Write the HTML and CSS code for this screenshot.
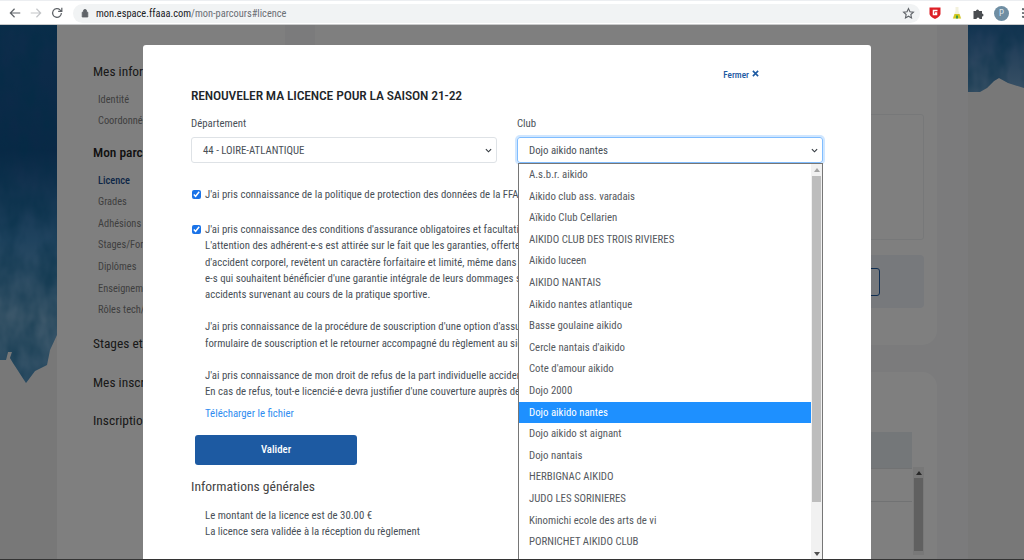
FILE: index.html
```html
<!DOCTYPE html>
<html lang="fr">
<head>
<meta charset="utf-8">
<title>Mon parcours</title>
<link rel="stylesheet" href="styles.css">
</head>
<body>
<div class="window">
  <header class="toolbar">
    <div class="nav-icons">
      <svg class="tb-icon" viewBox="0 0 16 16"><path d="M14 8H3M7.500 3.200 2.700 8l4.800 4.800" class="st dark"/></svg>
      <svg class="tb-icon" viewBox="0 0 16 16"><path d="M2 8h11M8.500 3.200 13.300 8l-4.800 4.800" class="st faint"/></svg>
      <svg class="tb-icon" viewBox="0 0 16 16"><path d="M13 8a5 5 0 1 1-1.500-3.600L13.500 6.200M13.500 2v4.200H9.300" class="st dark"/></svg>
    </div>
    <div class="omnibox">
      <svg class="lock" viewBox="0 0 10 12"><path d="M1.500 5h7v6h-7zM3 5V3.500a2 2 0 0 1 4 0V5" class="lock-path"/></svg>
      <span class="url"><span class="host">mon.espace.ffaaa.com</span>/mon-parcours#licence</span>
      <svg class="star" viewBox="0 0 16 16"><path d="M8 2l1.800 3.900 4.200.5-3.100 2.900.8 4.200L8 11.400l-3.700 2.100.8-4.200L2 6.400l4.200-.5z" class="st dark"/></svg>
    </div>
    <div class="ext-icons">
      <svg class="ext" viewBox="0 0 14 14"><path d="M1.500 1.500h11v6c0 2.500-3 4.500-5.500 5.500C4.500 12 1.500 10 1.500 7.500z" fill="#dd1f26"/><path d="M9.500 4.500h-4v4h3V7H7" fill="none" stroke="#fff" stroke-width="1.500"/></svg>
      <svg class="ext" viewBox="0 0 14 14"><path d="M5.500 1h3v4l3 7.500h-9l3-7.500z" fill="#f3f1dd"/><path d="M4.500 8h5l1.500 4.500H3z" fill="#d4c81e"/><path d="M6 9.500h2v3H6z" fill="#3f9b45"/></svg>
      <svg class="ext" viewBox="0 0 14 14"><path d="M1.500 5H4a1.500 1.500 0 1 1 3 0h3v2.500a1.500 1.500 0 1 1 0 3V13H7.500a1.500 1.500 0 1 0-3 0H1.500z" fill="#4a4d51"/></svg>
      <span class="avatar">P</span>
      <svg class="dots" viewBox="0 0 4 14"><circle cx="2" cy="2.500" r="1.300"/><circle cx="2" cy="7" r="1.300"/><circle cx="2" cy="11.500" r="1.300"/></svg>
    </div>
  </header>

  <main class="stage">
    <div class="page">
      <svg class="paint" viewBox="0 0 57 534" preserveAspectRatio="none">
        <defs>
          <linearGradient id="blueL" x1="0" y1="0" x2="0" y2="1">
            <stop offset="0" stop-color="#1a5a96"/><stop offset=".35" stop-color="#15508c"/>
            <stop offset=".6" stop-color="#3f86bd"/><stop offset=".82" stop-color="#80b4d9"/><stop offset="1" stop-color="#5f9ecb"/>
          </linearGradient>
          <filter id="grain"><feTurbulence type="fractalNoise" baseFrequency=".05 .03" numOctaves="3"/><feColorMatrix values="0 0 0 0 0 0 0 0 0 .1 0 0 0 0 .25 0 0 0 .9 -.25"/><feComposite in2="SourceGraphic" operator="in"/></filter>
        </defs>
        <rect width="57" height="534" fill="#f1f1f1"/>
        <path d="M0 0H57V310L50 325 47 340 35 346 26 358 13 338 10 333 12 327 8 327 6 335H0z" fill="url(#blueL)"/>
        <path d="M0 0H57V310L50 325 47 340 35 346 26 358 13 338 10 333 12 327 8 327 6 335H0z" filter="url(#grain)"/>
      </svg>

      <div class="content">
        <nav class="sidebar">
          <h2 class="side-head">Mes informations</h2>
          <ul class="side-list">
            <li>Identité</li>
            <li>Coordonnées</li>
          </ul>
          <h2 class="side-head strong">Mon parcours</h2>
          <ul class="side-list second-list">
            <li class="current">Licence</li>
            <li>Grades</li>
            <li>Adhésions</li>
            <li>Stages/Formations</li>
            <li>Diplômes</li>
            <li>Enseignement</li>
            <li>Rôles tech/admin</li>
          </ul>
          <h2 class="side-head lone l1">Stages et formations</h2>
          <h2 class="side-head lone l2">Mes inscriptions</h2>
          <h2 class="side-head lone l3">Inscription</h2>
        </nav>
        <section class="main-col">
          <div class="card card-top">
            <div class="spacer-a"></div>
            <div class="outline-box"></div>
            <div class="tint-box"><span class="tint-btn"></span></div>
          </div>
          <div class="card card-bottom">
            <div class="table-wrap">
              <div class="table">
                <div class="thead"></div>
                <div class="trow"></div>
                <div class="trow"></div>
              </div>
              <div class="tscroll"><span class="tup"></span><span class="tthumb"></span></div>
            </div>
          </div>
        </section>
      </div>

      <svg class="paint" viewBox="0 0 56 534" preserveAspectRatio="none">
        <defs>
          <linearGradient id="blueR" x1="0" y1="0" x2="0" y2="1">
            <stop offset="0" stop-color="#2f6ca8"/><stop offset="1" stop-color="#72a2cb"/>
          </linearGradient>
        </defs>
        <rect width="56" height="534" fill="#f1f1f1"/>
        <path d="M0 0H56V63L40 58 31 53 26 56 19 63 12 67H0z" fill="url(#blueR)"/>
        <path d="M0 0H56V63L40 58 31 53 26 56 19 63 12 67H0z" filter="url(#grain)"/>
      </svg>
    </div>

    <div class="backdrop"></div>

    <div class="modal">
      <a class="close">Fermer <svg class="close-x" viewBox="0 0 8 8"><path d="M1 1l6 6M7 1L1 7"/></svg></a>
      <h1 class="title">RENOUVELER MA LICENCE POUR LA SAISON 21-22</h1>
      <div class="fields">
        <div class="field">
          <label class="lbl">Département</label>
          <div class="select">44 - LOIRE-ATLANTIQUE<svg class="chev" viewBox="0 0 8 5"><path d="M1 1l3 3 3-3"/></svg></div>
        </div>
        <div class="field">
          <label class="lbl">Club</label>
          <div class="select focus">Dojo aikido nantes<svg class="chev" viewBox="0 0 8 5"><path d="M1 1l3 3 3-3"/></svg></div>
        </div>
      </div>

      <div class="check-row first">
        <input class="cb" type="checkbox" checked>
        <p class="para">J'ai pris connaissance de la politique de protection des données de la FFAAA</p>
      </div>
      <div class="check-row second">
        <input class="cb" type="checkbox" checked>
        <div class="para-wrap">
          <p class="para">J'ai pris connaissance des conditions d'assurance obligatoires et facultatives<br>
          L'attention des adhérent-e-s est attirée sur le fait que les garanties, offertes par<br>
          d'accident corporel, revêtent un caractère forfaitaire et limité, même dans le cas<br>
          e-s qui souhaitent bénéficier d'une garantie intégrale de leurs dommages suite<br>
          accidents survenant au cours de la pratique sportive.</p>
          <p class="para gap">J'ai pris connaissance de la procédure de souscription d'une option d'assurance<br>
          formulaire de souscription et le retourner accompagné du règlement au siège</p>
          <p class="para gap">J'ai pris connaissance de mon droit de refus de la part individuelle accident<br>
          En cas de refus, tout-e licencié-e devra justifier d'une couverture auprès de</p>
          <a class="file-link">Télécharger le fichier</a>
        </div>
      </div>
      <button class="submit" type="button">Valider</button>
      <h3 class="info-head">Informations générales</h3>
      <p class="para info">Le montant de la licence est de 30.00 €<br>La licence sera validée à la réception du règlement</p>

      <div class="dropdown">
        <ul class="options">
          <li>A.s.b.r. aikido</li>
          <li>Aikido club ass. varadais</li>
          <li>Aïkido Club Cellarien</li>
          <li>AIKIDO CLUB DES TROIS RIVIERES</li>
          <li>Aikido luceen</li>
          <li>AIKIDO NANTAIS</li>
          <li>Aikido nantes atlantique</li>
          <li>Basse goulaine aikido</li>
          <li>Cercle nantais d'aikido</li>
          <li>Cote d'amour aikido</li>
          <li>Dojo 2000</li>
          <li class="selected">Dojo aikido nantes</li>
          <li>Dojo aikido st aignant</li>
          <li>Dojo nantais</li>
          <li>HERBIGNAC AIKIDO</li>
          <li>JUDO LES SORINIERES</li>
          <li>Kinomichi ecole des arts de vi</li>
          <li>PORNICHET AIKIDO CLUB</li>
          <li>Saint nazaire aikido</li>
        </ul>
        <div class="scrollbar"><span class="arrow up"></span><span class="thumb"></span><span class="arrow down"></span></div>
      </div>
    </div>
  </main>
  <div class="taskbar"></div>
</div>
</body>
</html>
```
FILE: styles.css
```css
* { box-sizing: border-box; }
html, body { margin: 0; height: 100%; overflow: hidden; }
body { font-family: Roboto, "Liberation Sans", sans-serif; font-stretch: 85%; color: #495057; background: #fff; }
h1, h2, h3, p, ul { margin: 0; padding: 0; font-weight: 400; }
ul { list-style: none; }

.window { width: 1024px; height: 560px; display: flex; flex-direction: column; overflow: hidden; }

/* browser chrome */
.toolbar { height: 25px; flex: none; display: flex; align-items: center; background: #fff; border-top: 1px solid #eceef1; border-bottom: 1px solid #c9cacb; padding: 1px 0 0 0; }
.nav-icons { width: 73px; flex: none; display: flex; padding-left: 8px; gap: 7px; }
.tb-icon { width: 14px; height: 14px; }
.st { fill: none; stroke-width: 1.4; }
.dark { stroke: #5f6368; }
.faint { stroke: #c3c5c8; }
.omnibox { width: 847px; height: 19px; flex: none; border-radius: 10px; background: #f1f3f4; display: flex; align-items: center; padding-left: 8px; padding-right: 5px; }
.lock { width: 8px; height: 10px; flex: none; }
.lock-path { fill: #5f6368; stroke: #5f6368; stroke-width: 1; }
.url { margin-left: 7px; font-size: 10.4px; color: #6b6f74; flex: 1; white-space: nowrap; }
.host { color: #202124; }
.star { width: 13px; height: 13px; flex: none; }
.ext-icons { flex: 1; display: flex; align-items: center; padding-left: 8px; gap: 8px; }
.ext { width: 14px; height: 14px; flex: none; }
.avatar { width: 15px; height: 15px; flex: none; border-radius: 50%; background: #6f8ea3; color: #dfe8ee; font-size: 9px; display: flex; align-items: center; justify-content: center; }
.dots { width: 4px; height: 12px; flex: none; margin-left: 4px; fill: #5f6368; }

/* page underneath */
.stage { position: relative; flex: 1; min-height: 0; overflow: hidden; }
.page { height: 100%; display: grid; grid-template-columns: 57px 1fr 56px; background: #f6f7f9; }
.paint { width: 100%; height: 100%; display: block; }
.content { display: grid; grid-template-columns: 228px 622px; column-gap: 30px; min-width: 0; overflow: hidden; }
.sidebar { background: #fff; padding: 38px 0 0 36px; white-space: nowrap; overflow: hidden; }
.side-head { font-size: 13.400px; font-stretch: 82%; line-height: 18px; color: #333; }
.side-head.strong { font-weight: 500; color: #222; margin-top: 12px; }
.side-head.l1 { margin-top: 14px; }
.side-head.l2 { margin-top: 21px; }
.side-head.l3 { margin-top: 20px; }
.side-list { margin-top: 7.500px; padding-left: 5px; font-size: 10.400px; font-stretch: 78%; color: #7e7e7e; }
.second-list { margin-top: 8px; }
.side-list li { height: 21.600px; line-height: 21.600px; }
.side-list .current { color: #1d4f8f; font-weight: 500; }

.main-col { display: flex; flex-direction: column; gap: 27px; }
.card { background: #fff; padding: 0 13px 0 0; }
.card-top { height: 320px; border-radius: 0 0 15px 15px; display: flex; flex-direction: column; }
.spacer-a { height: 89px; flex: none; }
.outline-box { height: 126px; flex: none; margin-left: 200px; border: 1px solid #eef0f3; border-radius: 3px; }
.tint-box { height: 53px; flex: none; margin: 15px 0 0 200px; background: #eef3f9; border-radius: 4px; padding: 13px 44px 0 0; }
.tint-btn { display: block; height: 28px; border: 1px solid #1d5aa2; border-radius: 3px; margin-left: 200px; }
.card-bottom { flex: 1; border-radius: 15px 15px 0 0; padding-top: 60px; }
.table-wrap { display: flex; margin-left: 200px; }
.table { flex: 1; }
.thead { height: 36px; background: #e9eef3; }
.trow { height: 33px; border-top: 1px solid #e2e4e6; }
.tscroll { width: 11px; margin: 35px 0 0 1px; background: #f1f1f1; height: 88px; display: flex; flex-direction: column; align-items: center; }
.tup { width: 0; height: 0; margin: 4px 0 3px; border: 3px solid transparent; border-top: 0; border-bottom: 4px solid #505050; }
.tthumb { width: 9px; flex: 1; margin-bottom: 4px; background: #c1c1c1; }

.backdrop { position: absolute; top: 0; left: 0; width: 100%; height: 100%; background: #000; opacity: .5; }

/* modal */
.modal { position: absolute; left: 143px; top: 20px; width: 728px; height: 520px; background: #fff; border-radius: 3px 3px 0 0; padding: 21px 48px 0; }
.close { display: flex; justify-content: flex-end; align-items: center; gap: 3px; height: 16px; margin-right: 64px; font-size: 9.200px; font-stretch: 82%; font-weight: 500; color: #1d5aa2; }
.close-x { width: 7px; height: 7px; fill: none; stroke: #1d5aa2; stroke-width: 1.800; margin-top: -2px; }
.title { margin-top: 4px; font-size: 13.600px; letter-spacing: -.15px; font-stretch: 81%; line-height: 18px; font-weight: 500; color: #212529; white-space: nowrap; }
.fields { display: grid; grid-template-columns: 306px 306px; column-gap: 20px; margin-top: 13px; }
.lbl { display: block; font-size: 10.800px; line-height: 14px; color: #495057; margin-bottom: 6px; }
.select { height: 26px; border: 1px solid #dee2e6; border-radius: 3px; font-size: 10.800px; line-height: 25px; padding-left: 11px; color: #495057; position: relative; }
.select.focus { border-color: #80bdff; box-shadow: 0 0 0 2px #cfe6ff; }
.chev { position: absolute; right: 4px; top: 10px; width: 7px; height: 5px; fill: none; stroke: #343a40; stroke-width: 1.300; }
.check-row { display: flex; align-items: flex-start; gap: 4px; white-space: nowrap; }
.check-row.first { margin-top: 24px; margin-left: 1px; }
.check-row.second { margin-top: 19px; margin-left: 1px; }
.cb { width: 9px; height: 9px; margin: 3px 0 0; accent-color: #1a73e8; flex: none; }
.para { font-size: 10.800px; line-height: 16.200px; color: #495057; }
.para.gap { margin-top: 16.200px; }
.file-link { display: block; margin-top: 6px; font-size: 10.800px; line-height: 16.200px; color: #2f8df0; }
.submit { display: block; width: 162px; height: 30px; margin: 12px 0 0 4px; border: 0; border-radius: 3px; background: #1d5aa2; color: #fff; font: 500 10.800px Roboto, sans-serif; font-stretch: 85%; }
.info-head { margin-top: 12.500px; font-size: 13.600px; line-height: 18px; color: #444; }
.para.info { margin: 12.500px 0 0 14px; }

/* dropdown popup */
.dropdown { position: absolute; left: 375px; top: 118px; width: 305px; height: 410px; background: #fff; border: 1px solid #767676; border-bottom: 0; display: flex; overflow: hidden; }
.options { flex: 1; min-width: 0; font-size: 10.800px; color: #55595e; white-space: nowrap; }
.options li { height: 21.600px; line-height: 21.600px; padding-left: 10px; }
.options .selected { background: #1e90ff; color: #fff; }
.scrollbar { width: 11px; flex: none; height: 396px; background: #f1f1f1; display: flex; flex-direction: column; align-items: center; }
.thumb { width: 9px; height: 326px; background: #bdbdbd; }
.arrow { width: 0; height: 0; border: 3px solid transparent; }
.arrow.up { border-top: 0; border-bottom: 4px solid #a3a3a3; margin: 4px 0 4px; }
.arrow.down { border-bottom: 0; border-top: 4px solid #505050; margin-top: auto; margin-bottom: 4px; }

.taskbar { height: 1px; flex: none; background: #333; }
```
